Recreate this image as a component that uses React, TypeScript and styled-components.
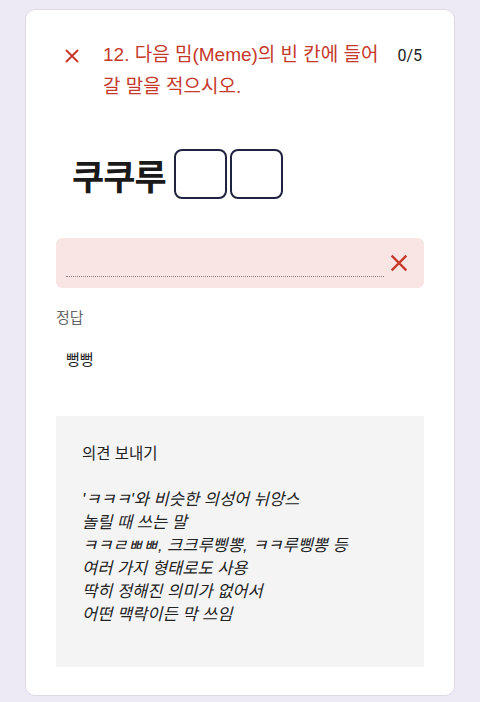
import React from "react";
import styled, { createGlobalStyle } from "styled-components";

const GlobalStyle = createGlobalStyle`
  html, body {
    margin: 0;
    padding: 0;
    background: #ede9f5;
  }
  body {
    font-family: "Liberation Sans", "Noto Sans CJK KR", sans-serif;
  }
`;

const feedbackLines = [
  "'ㅋㅋㅋ'와 비슷한 의성어 뉘앙스",
  "놀릴 때 쓰는 말",
  "ㅋㅋㄹㅃㅃ, 크크루삥뽕, ㅋㅋ루삥뽕 등",
  "여러 가지 형태로도 사용",
  "딱히 정해진 의미가 없어서",
  "어떤 맥락이든 막 쓰임",
];

const CrossIcon: React.FC<{ size: number }> = ({ size }) => (
  <svg width={size} height={size} viewBox="0 0 24 24" fill="none">
    <path
      d="M4 4L20 20M20 4L4 20"
      stroke="#c8392b"
      strokeWidth="2.6"
      strokeLinecap="butt"
    />
  </svg>
);

const App: React.FC = () => {
  return (
    <Page>
      <GlobalStyle />
      <Card>
        <Header>
          <IconSlot>
            <CrossIcon size={18} />
          </IconSlot>
          <Title>12. 다음 밈(Meme)의 빈 칸에 들어갈 말을 적으시오.</Title>
          <Score>0/5</Score>
        </Header>

        <Meme>
          <MemeText>쿠쿠루</MemeText>
          <Blank />
          <Blank />
        </Meme>

        <AnswerBox>
          <DottedLine />
          <CrossIcon size={22} />
        </AnswerBox>

        <Label>정답</Label>
        <Correct>뻥뻥</Correct>

        <Feedback>
          <FeedbackTitle>의견 보내기</FeedbackTitle>
          <FeedbackBody>
            {feedbackLines.map((line) => (
              <div key={line}>{line}</div>
            ))}
          </FeedbackBody>
        </Feedback>
      </Card>
    </Page>
  );
};

const Page = styled.div`
  width: 480px;
  height: 702px;
  padding: 9px 25px 0;
  box-sizing: border-box;
`;

const Card = styled.div`
  height: 687px;
  box-sizing: border-box;
  background: #ffffff;
  border: 1px solid #dddae3;
  border-radius: 10px;
  padding: 30px 30px 0 30px;
  display: flex;
  flex-direction: column;
`;

const Header = styled.div`
  display: flex;
  align-items: flex-start;
  padding-left: 7px;
`;

const IconSlot = styled.div`
  width: 40px;
  flex-shrink: 0;
  padding-top: 7px;
`;

const Title = styled.div`
  flex: 1;
  color: #c5392b;
  font-size: 19px;
  line-height: 32px;
  margin-top: -1px;
  word-break: break-all;
`;

const Score = styled.div`
  font-family: Roboto, "Liberation Sans", sans-serif;
  font-size: 16px;
  line-height: 31px;
  color: #222;
  margin-left: 4px;
  margin-right: 2px;
`;

const Meme = styled.div`
  display: flex;
  align-items: center;
  gap: 3px;
  padding-left: 16px;
  margin-top: 45px;
  height: 52px;
`;

const MemeText = styled.div`
  font-family: "Noto Sans CJK KR", sans-serif;
  font-weight: 700;
  font-size: 35px;
  color: #1a1a1a;
  letter-spacing: -1px;
  margin-right: 5px;
  line-height: 1;
`;

const Blank = styled.div`
  width: 53px;
  height: 50px;
  box-sizing: border-box;
  border: 2.5px solid #20233f;
  border-radius: 8px;
`;

const AnswerBox = styled.div`
  margin-top: 38px;
  height: 50px;
  background: #f9e6e4;
  border-radius: 6px;
  display: flex;
  align-items: center;
  gap: 4px;
  padding: 0 14px 0 10px;
  box-sizing: border-box;
`;

const DottedLine = styled.div`
  flex: 1;
  margin-top: 26px;
  border-bottom: 1px dotted #8a7f7e;
`;

const Label = styled.div`
  margin-top: 20px;
  font-size: 15px;
  line-height: 20px;
  color: #666;
`;

const Correct = styled.div`
  margin-top: 22px;
  padding-left: 10px;
  font-size: 15px;
  line-height: 20px;
  color: #222;
`;

const Feedback = styled.div`
  margin-top: 46px;
  height: 251px;
  background: #f4f4f5;
  padding: 28px 26px 0;
  box-sizing: border-box;
`;

const FeedbackTitle = styled.div`
  font-size: 15.5px;
  line-height: 20px;
  color: #222;
`;

const FeedbackBody = styled.div`
  margin-top: 24px;
  font-size: 16.5px;
  line-height: 23px;
  font-style: italic;
  color: #222;
`;

export default App;
